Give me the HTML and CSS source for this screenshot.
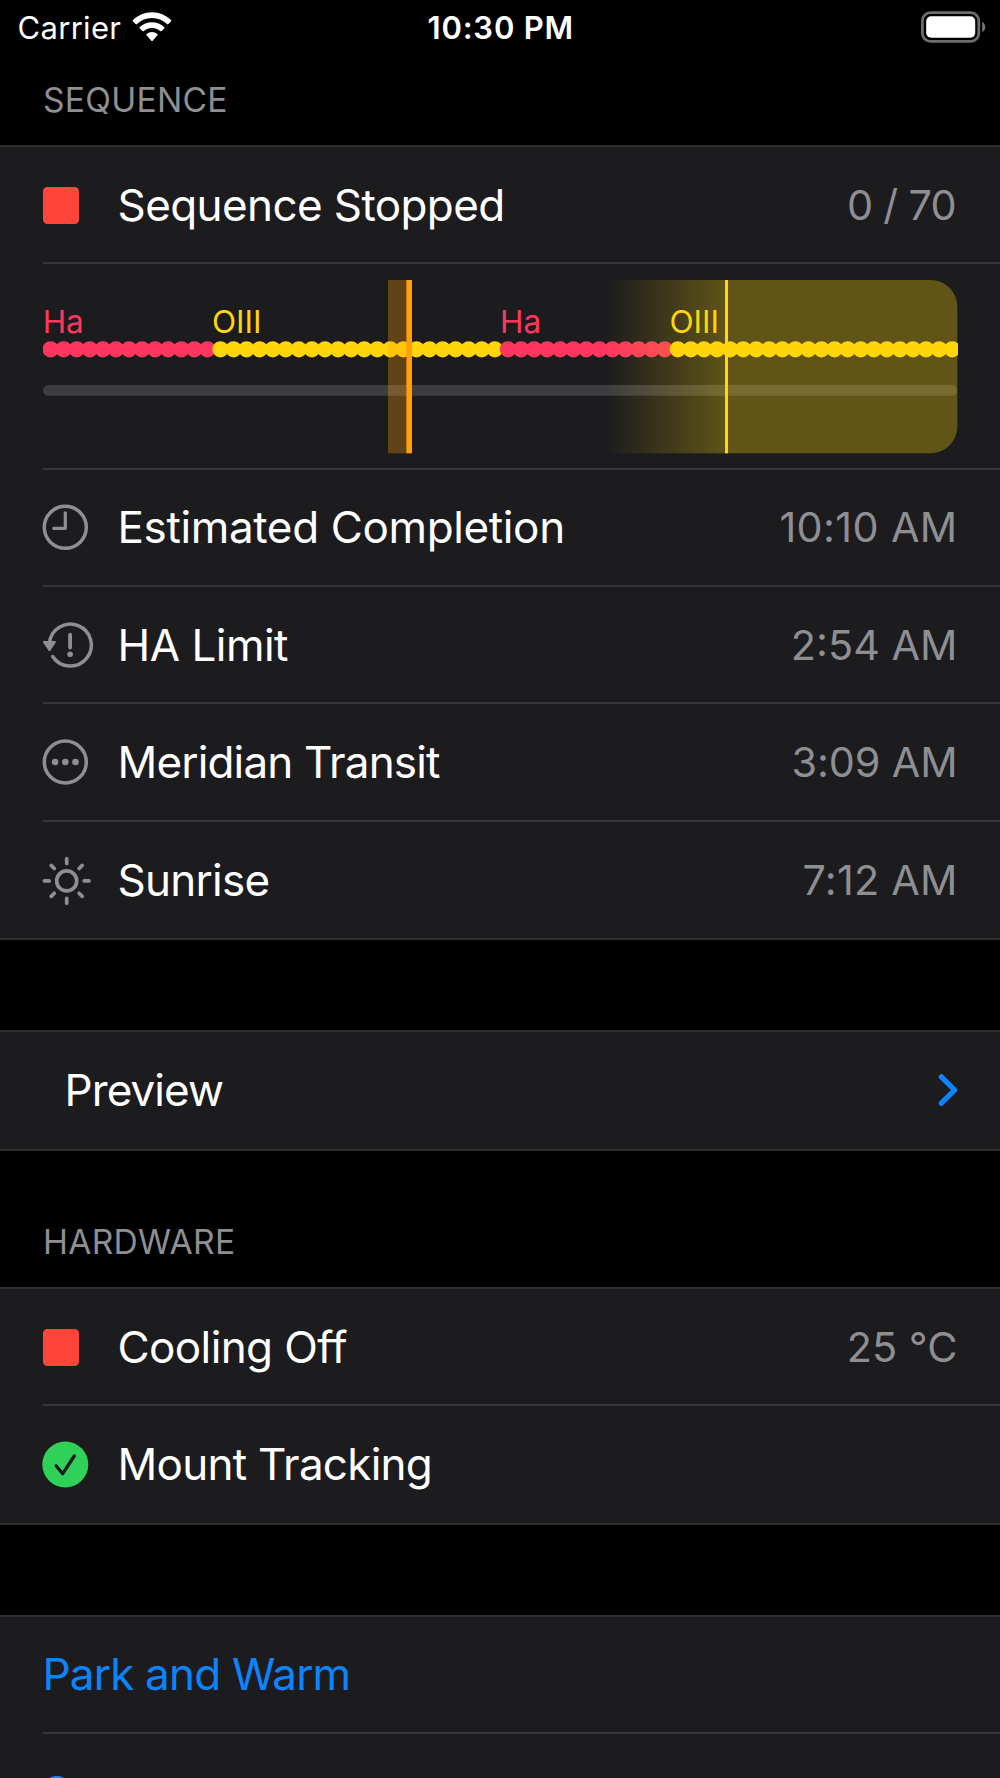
FILE: index.html
```html
<!DOCTYPE html>
<html lang="en">
<head>
<meta charset="utf-8">
<title>Sequence</title>
<link rel="stylesheet" href="styles.css">
</head>
<body>
<header class="status-bar">
  <div class="status-left">
    <span class="carrier">Carrier</span>
    <svg class="wifi" width="40" height="30" viewBox="0 0 40 30" fill="#fff">
      <path d="M20 0.3C27.3 0.3 34 3.2 39 8.1Q39.7 8.8 39 9.5L36.4 12.1Q35.7 12.8 35 12.1C31 8.3 25.8 6 20 6S9 8.3 5 12.1Q4.3 12.8 3.600 12.1L1 9.500Q0.300 8.800 1 8.100C6 3.200 12.700 0.300 20 0.300Z"/>
      <path d="M20 10.200C24.700 10.200 29 12 32.200 15Q32.900 15.700 32.200 16.400L29.600 19Q28.900 19.700 28.200 19C26 17.100 23.200 15.900 20 15.900S14 17.100 11.800 19Q11.100 19.700 10.400 19L7.800 16.400Q7.100 15.700 7.800 15C11 12 15.300 10.200 20 10.200Z"/>
      <path d="M20 19.900C22 19.900 23.900 20.700 25.400 21.900Q26.100 22.600 25.400 23.300L20.700 28.700Q20 29.400 19.300 28.700L14.600 23.300Q13.900 22.600 14.600 21.900C16.100 20.700 18 19.900 20 19.900Z"/>
    </svg>
  </div>
  <div class="clock">10:30 PM</div>
  <svg class="battery" width="66" height="32" viewBox="0 0 66 32">
    <rect x="1.400" y="1.700" width="56.400" height="28.600" rx="8" fill="none" stroke="#6d6d6d" stroke-width="2.700"/>
    <rect x="5.200" y="5.300" width="49" height="21.400" rx="4.800" fill="#fff"/>
    <path d="M61.200 11C65.300 12.300 65.300 19.700 61.200 21Z" fill="#757575"/>
  </svg>
</header>

<h2 class="section-title section-title-first">SEQUENCE</h2>
<section class="group">
  <div class="row">
    <span class="icon"><span class="stop"></span></span>
    <span class="label tight-60">Sequence Stopped</span>
    <span class="value count">0 / 70</span>
  </div>
  <div class="row chart-row">
    <svg class="chart" width="915" height="174" viewBox="0 0 915 174">
      <defs>
        <linearGradient id="dawn" x1="0" x2="1" y1="0" y2="0">
          <stop offset="0" stop-color="#ffd60a" stop-opacity="0"/>
          <stop offset="1" stop-color="#ffd60a" stop-opacity=".3"/>
        </linearGradient>
      </defs>
      <rect x="0" y="105.100" width="914.300" height="10.700" rx="5.350" fill="#3d3d40"/>
      <g class="filters">
        <text x="-0.300" y="53.300" fill="#ff375f">Ha</text>
        <text x="169" y="53.300" fill="#ffd60a">OIII</text>
        <text x="457" y="53.300" fill="#ff375f">Ha</text>
        <text x="626.400" y="53.300" fill="#ffd60a">OIII</text>
      </g>
      <g class="exposures">
        <path d="M7.600 69.300H165.100" stroke="#ff375f"/>
        <path d="M177.470 69.300H452.600" stroke="#ffd60a"/>
        <path d="M464.940 69.300H622.600" stroke="#ff375f"/>
        <path d="M634.800 69.300H910.600" stroke="#ffd60a"/>
      </g>
      <rect x="345" y="0" width="18.300" height="173.300" fill="#ff9f0a" fill-opacity=".3"/>
      <rect x="363.300" y="0" width="5.700" height="173.300" fill="#ff9f0a"/>
      <rect x="563" y="0" width="120" height="173.300" fill="url(#dawn)"/>
      <path d="M683 0H887.630A26.670 26.670 0 0 1 914.300 26.670V146.630A26.670 26.670 0 0 1 887.630 173.300H683Z" fill="#ffd60a" fill-opacity=".3"/>
      <rect x="682" y="0" width="3" height="173.300" fill="#ffd60a"/>
    </svg>
  </div>
  <div class="row">
    <svg class="icon" width="50" height="50" viewBox="0 0 50 50">
      <circle cx="22.300" cy="25.300" r="21" stroke-width="3.500"/>
      <path d="M22.300 10.800V26.300H10.700" stroke-width="3.200"/>
    </svg>
    <span class="label tight-37">Estimated Completion</span>
    <span class="value loose-33">10:10 AM</span>
  </div>
  <div class="row">
    <svg class="icon" width="50" height="50" viewBox="0 0 50 50">
      <g transform="translate(-.5 0)">
        <path d="M6.900 23.500A21 21 0 1 1 10.200 36.500" stroke-width="3.500"/>
        <path class="solid" d="M1.300 21H12.500Q14 21 13.200 22.500L8 30.500Q7 31.800 6 30.500L0.600 22.500Q-0.200 21 1.300 21Z"/>
        <path d="M27.600 14.700V27.500" stroke-width="3.800"/>
        <circle class="solid" cx="27.600" cy="34.300" r="2.800"/>
      </g>
    </svg>
    <span class="label tight-51">HA Limit</span>
    <span class="value">2:54 AM</span>
  </div>
  <div class="row">
    <svg class="icon" width="50" height="50" viewBox="0 0 50 50">
      <circle cx="22.300" cy="25" r="21" stroke-width="3.500"/>
      <g class="solid"><circle cx="12.100" cy="25" r="3.300"/><circle cx="22.300" cy="25" r="3.300"/><circle cx="32.500" cy="25" r="3.300"/></g>
    </svg>
    <span class="label tight-83">Meridian Transit</span>
    <span class="value tight-13">3:09 AM</span>
  </div>
  <div class="row last">
    <svg class="icon" width="50" height="50" viewBox="0 0 50 50">
      <g transform="translate(23.700 25.900)" stroke-width="3.700">
        <circle r="10"/>
        <path d="M0 -17.500V-22.300M0 17.500V22.300M-17.500 0H-22.300M17.500 0H22.300M-12.400 -12.400L-15.500 -15.500M12.400 -12.400L15.500 -15.500M-12.400 12.400L-15.500 15.500M12.400 12.400L15.500 15.500"/>
      </g>
    </svg>
    <span class="label tight-75">Sunrise</span>
    <span class="value loose-18">7:12 AM</span>
  </div>
</section>

<section class="group preview-group">
  <div class="row last preview">
    <span class="label tight-90">Preview</span>
    <svg class="chevron" width="20" height="34" viewBox="0 0 20 34"><path d="M3.400 3.800L16.600 17L3.400 30.200"/></svg>
  </div>
</section>

<h2 class="section-title">HARDWARE</h2>
<section class="group">
  <div class="row">
    <span class="icon"><span class="stop"></span></span>
    <span class="label tight-60">Cooling Off</span>
    <span class="value">25 °C</span>
  </div>
  <div class="row last">
    <svg class="icon" width="50" height="50" viewBox="0 0 50 50">
      <circle cx="22.300" cy="25.500" r="23" fill="#30d158" stroke="none"/>
      <path d="M13.100 26.800L19.700 34.700L31.300 17" stroke="#1c1c1e" stroke-width="3.300"/>
    </svg>
    <span class="label tight-75">Mount Tracking</span>
  </div>
</section>

<section class="group actions">
  <div class="row"><span class="label tight-80">Park and Warm</span></div>
  <div class="row last"><span class="label">S</span></div>
</section>
</body>
</html>
```
FILE: styles.css
```css
* { box-sizing: border-box; }

body {
  margin: 0;
  height: 1778px;
  overflow: hidden;
  background: #000;
  color: #fff;
  font-family: Inter, "Liberation Sans", sans-serif;
  font-size: 44px;
  -webkit-font-smoothing: antialiased;
}

.status-bar {
  display: grid;
  grid-template-columns: 1fr auto 1fr;
  align-items: center;
  height: 54px;
  padding: 0 13px 0 17.500px;
  font-size: 31px;
}
.status-left { display: flex; align-items: center; gap: 11px; }
.carrier { letter-spacing: .31px; }
.wifi { display: block; }
.clock { font-weight: 600; letter-spacing: .8px; margin-right: 3px; }
.battery { justify-self: end; display: block; margin-bottom: 1px; }

.section-title {
  display: flex;
  align-items: flex-end;
  height: 136px;
  margin: 0;
  padding: 0 43px 24.700px;
  color: #8e8e93;
  font-size: 33.600px;
  font-weight: 400;
  line-height: 40px;
  letter-spacing: .28px;
}
.section-title-first { height: 91px; }

.group {
  background: #1c1c1e;
  border-top: 2px solid #2f2f31;
  border-bottom: 2px solid #2f2f31;
}

.row {
  display: flex;
  align-items: center;
  height: 117.330px;
  margin-left: 42.500px;
  padding-right: 42.500px;
  border-bottom: 2px solid #363638;
  white-space: nowrap;
}
.row.last { height: 116.300px; border-bottom: 0; }

.icon {
  flex: none;
  width: 50px;
  height: 50px;
  margin-right: 25px;
  overflow: visible;
  fill: none;
  stroke: #8e8e93;
  stroke-linecap: round;
  stroke-linejoin: round;
}
.icon .solid { fill: #8e8e93; stroke: none; }
span.icon { display: flex; align-items: center; }
.stop {
  width: 36.500px;
  height: 37px;
  margin-top: 2.500px;
  border-radius: 4.500px;
  background: #ff453a;
}

.label { line-height: 54px; }
.value { margin-left: auto; color: #8e8e93; font-size: 41.400px; line-height: 52px; }

.chart-row { height: 205.330px; padding-top: 1.500px; }
.chart { flex: none; display: block; }
.filters { font-size: 31.500px; }
.exposures {
  fill: none;
  stroke-width: 16.300;
  stroke-linecap: round;
  stroke-dasharray: 0 13.067;
}

.preview-group { margin-top: 90px; }
.row.preview { height: 117px; padding-left: 22px; }
.chevron {
  margin-left: auto;
  fill: none;
  stroke: #0a84ff;
  stroke-width: 5.300;
  stroke-linecap: round;
  stroke-linejoin: round;
}

.actions { margin-top: 90px; color: #0a84ff; }

/* Per-string tracking */
.count { letter-spacing: -.7px; margin-right: 1.500px; }
.tight-90 { letter-spacing: -.9px; }
.tight-83 { letter-spacing: -.83px; }
.tight-80 { letter-spacing: -.8px; }
.tight-75 { letter-spacing: -.75px; }
.tight-60 { letter-spacing: -.6px; }
.tight-51 { letter-spacing: -.51px; }
.tight-37 { letter-spacing: -.37px; }
.tight-13 { letter-spacing: -.13px; }
.loose-18 { letter-spacing: .18px; }
.loose-33 { letter-spacing: .33px; }
```
